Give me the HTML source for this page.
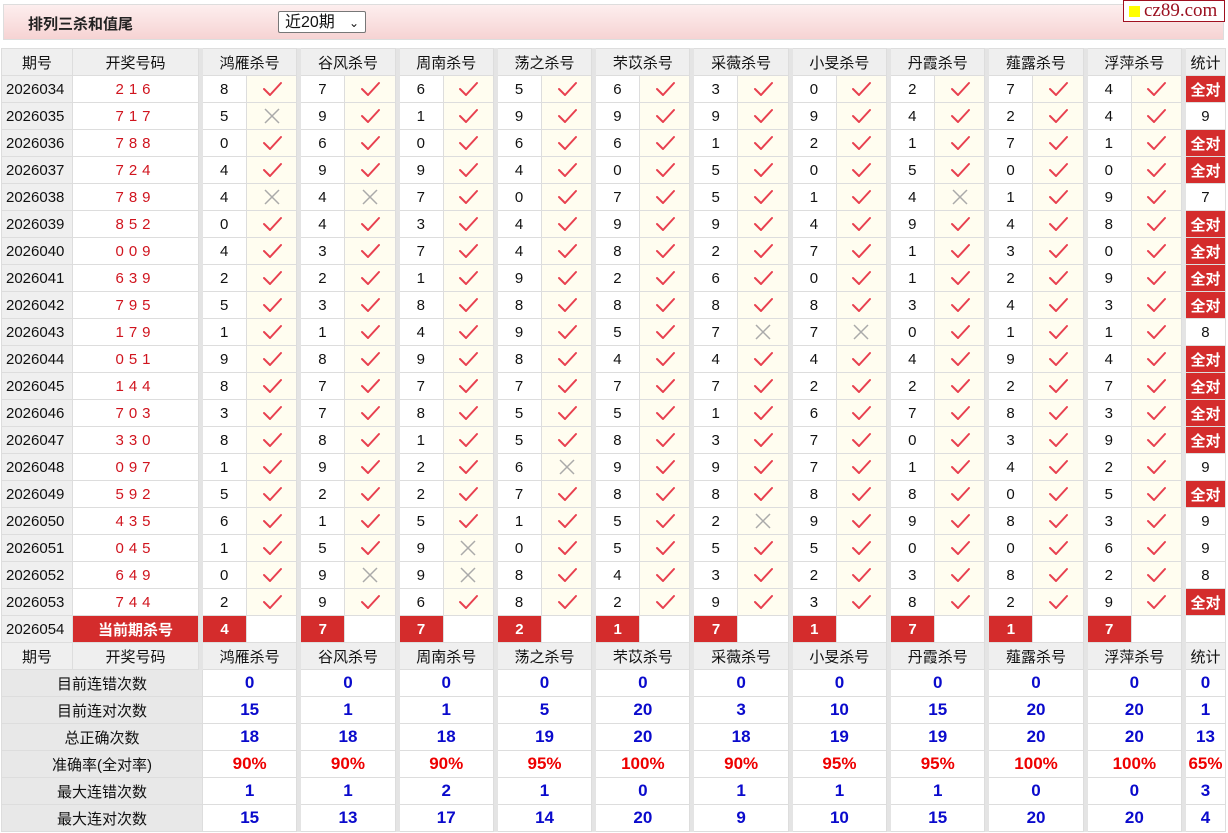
<!DOCTYPE html>
<html><head><meta charset="utf-8"><style>
body{margin:0;background:#fff;font-family:"Liberation Sans","Noto Sans CJK SC",sans-serif;width:1228px;height:833px;overflow:hidden;position:relative}
.hd{position:absolute;left:3px;top:4px;width:1221px;height:36px;border:1px solid #ddd;background:linear-gradient(#fdeeee,#f6d3d3);box-sizing:border-box}
.hd b{position:absolute;left:24px;top:8px;font-size:15px;color:#222}
.sel{position:absolute;left:274px;top:6px;width:88px;height:22px;border:1px solid #777;border-radius:2px;background:#fff;font-size:16px;line-height:22px;padding-left:6px;box-sizing:border-box;color:#111}
.sel i{position:absolute;right:6px;top:0;font-style:normal;font-size:12px}
.logo{position:absolute;left:1123px;top:0;width:102px;height:22px;border:1px solid #a01020;background:#fff;box-sizing:border-box;font-family:"Liberation Serif",serif;font-size:19px;color:#9b1020;line-height:20px;padding-left:20px}
.logo:before{content:"";position:absolute;left:5px;top:5px;width:11px;height:11px;background:#ff0}
table{position:absolute;left:1px;top:48px;border-collapse:collapse;table-layout:fixed}
td{border:1px solid #ddd;height:26px;padding:0;font-size:15px;text-align:center;color:#111;white-space:nowrap}
td.q{background:#efefef;text-align:left;padding-left:4px}
td.h{background:#efefef}
td.s{background:#e4e4e4;border-color:#e4e4e4}
td.n{text-align:left;padding-left:17px}
td.c{background:#fffdf0}
td.r{color:#d0141e;letter-spacing:5px}
td.a{background:#d42c2c;color:#fff;font-weight:bold}
td.l{background:#e8e8e8}
td.b{color:#0a0acc;font-weight:bold;font-size:17px}
td.p{color:#e00;font-weight:bold;font-size:17px}
svg{display:block;margin:0 auto;width:22px;height:20px}
</style></head><body>
<svg width="0" height="0" style="position:absolute"><defs>
<symbol id="k" viewBox="0 0 22 20"><path d="M3 10 L9 16 L20 4" fill="none" stroke="#e8404f" stroke-width="2" stroke-linecap="round" stroke-linejoin="round"/></symbol>
<symbol id="x" viewBox="0 0 22 20"><path d="M4 3 L18 17 M18 3 L4 17" fill="none" stroke="#aaa" stroke-width="1.5"/></symbol>
</defs></svg>
<div class="hd"><b>排列三杀和值尾</b><div class="sel">近20期<i>&#8964;</i></div></div>
<div class="logo">cz89.com</div>
<table>
<colgroup><col style="width:71px"><col style="width:126px"><col style="width:4px">
<col style="width:44px"><col style="width:50.3px"><col style="width:4px">
<col style="width:44px"><col style="width:50.3px"><col style="width:4px">
<col style="width:44px"><col style="width:50.3px"><col style="width:4px">
<col style="width:44px"><col style="width:50.3px"><col style="width:4px">
<col style="width:44px"><col style="width:50.3px"><col style="width:4px">
<col style="width:44px"><col style="width:50.3px"><col style="width:4px">
<col style="width:44px"><col style="width:50.3px"><col style="width:4px">
<col style="width:44px"><col style="width:50.3px"><col style="width:4px">
<col style="width:44px"><col style="width:50.3px"><col style="width:4px">
<col style="width:44px"><col style="width:50.3px"><col style="width:4px">
<col style="width:40px"></colgroup>
<tr><td class="h">期号</td><td class="h">开奖号码</td><td class="s"></td><td class="h" colspan="2">鸿雁杀号</td><td class="s"></td><td class="h" colspan="2">谷风杀号</td><td class="s"></td><td class="h" colspan="2">周南杀号</td><td class="s"></td><td class="h" colspan="2">荡之杀号</td><td class="s"></td><td class="h" colspan="2">芣苡杀号</td><td class="s"></td><td class="h" colspan="2">采薇杀号</td><td class="s"></td><td class="h" colspan="2">小旻杀号</td><td class="s"></td><td class="h" colspan="2">丹霞杀号</td><td class="s"></td><td class="h" colspan="2">薤露杀号</td><td class="s"></td><td class="h" colspan="2">浮萍杀号</td><td class="s"></td><td class="h">统计</td></tr>
<tr><td class="q">2026034</td><td class="r">216</td><td class="s"></td><td class="n">8</td><td class="c"><svg><use href="#k"/></svg></td><td class="s"></td><td class="n">7</td><td class="c"><svg><use href="#k"/></svg></td><td class="s"></td><td class="n">6</td><td class="c"><svg><use href="#k"/></svg></td><td class="s"></td><td class="n">5</td><td class="c"><svg><use href="#k"/></svg></td><td class="s"></td><td class="n">6</td><td class="c"><svg><use href="#k"/></svg></td><td class="s"></td><td class="n">3</td><td class="c"><svg><use href="#k"/></svg></td><td class="s"></td><td class="n">0</td><td class="c"><svg><use href="#k"/></svg></td><td class="s"></td><td class="n">2</td><td class="c"><svg><use href="#k"/></svg></td><td class="s"></td><td class="n">7</td><td class="c"><svg><use href="#k"/></svg></td><td class="s"></td><td class="n">4</td><td class="c"><svg><use href="#k"/></svg></td><td class="s"></td><td class="a">全对</td></tr>
<tr><td class="q">2026035</td><td class="r">717</td><td class="s"></td><td class="n">5</td><td class="c"><svg><use href="#x"/></svg></td><td class="s"></td><td class="n">9</td><td class="c"><svg><use href="#k"/></svg></td><td class="s"></td><td class="n">1</td><td class="c"><svg><use href="#k"/></svg></td><td class="s"></td><td class="n">9</td><td class="c"><svg><use href="#k"/></svg></td><td class="s"></td><td class="n">9</td><td class="c"><svg><use href="#k"/></svg></td><td class="s"></td><td class="n">9</td><td class="c"><svg><use href="#k"/></svg></td><td class="s"></td><td class="n">9</td><td class="c"><svg><use href="#k"/></svg></td><td class="s"></td><td class="n">4</td><td class="c"><svg><use href="#k"/></svg></td><td class="s"></td><td class="n">2</td><td class="c"><svg><use href="#k"/></svg></td><td class="s"></td><td class="n">4</td><td class="c"><svg><use href="#k"/></svg></td><td class="s"></td><td>9</td></tr>
<tr><td class="q">2026036</td><td class="r">788</td><td class="s"></td><td class="n">0</td><td class="c"><svg><use href="#k"/></svg></td><td class="s"></td><td class="n">6</td><td class="c"><svg><use href="#k"/></svg></td><td class="s"></td><td class="n">0</td><td class="c"><svg><use href="#k"/></svg></td><td class="s"></td><td class="n">6</td><td class="c"><svg><use href="#k"/></svg></td><td class="s"></td><td class="n">6</td><td class="c"><svg><use href="#k"/></svg></td><td class="s"></td><td class="n">1</td><td class="c"><svg><use href="#k"/></svg></td><td class="s"></td><td class="n">2</td><td class="c"><svg><use href="#k"/></svg></td><td class="s"></td><td class="n">1</td><td class="c"><svg><use href="#k"/></svg></td><td class="s"></td><td class="n">7</td><td class="c"><svg><use href="#k"/></svg></td><td class="s"></td><td class="n">1</td><td class="c"><svg><use href="#k"/></svg></td><td class="s"></td><td class="a">全对</td></tr>
<tr><td class="q">2026037</td><td class="r">724</td><td class="s"></td><td class="n">4</td><td class="c"><svg><use href="#k"/></svg></td><td class="s"></td><td class="n">9</td><td class="c"><svg><use href="#k"/></svg></td><td class="s"></td><td class="n">9</td><td class="c"><svg><use href="#k"/></svg></td><td class="s"></td><td class="n">4</td><td class="c"><svg><use href="#k"/></svg></td><td class="s"></td><td class="n">0</td><td class="c"><svg><use href="#k"/></svg></td><td class="s"></td><td class="n">5</td><td class="c"><svg><use href="#k"/></svg></td><td class="s"></td><td class="n">0</td><td class="c"><svg><use href="#k"/></svg></td><td class="s"></td><td class="n">5</td><td class="c"><svg><use href="#k"/></svg></td><td class="s"></td><td class="n">0</td><td class="c"><svg><use href="#k"/></svg></td><td class="s"></td><td class="n">0</td><td class="c"><svg><use href="#k"/></svg></td><td class="s"></td><td class="a">全对</td></tr>
<tr><td class="q">2026038</td><td class="r">789</td><td class="s"></td><td class="n">4</td><td class="c"><svg><use href="#x"/></svg></td><td class="s"></td><td class="n">4</td><td class="c"><svg><use href="#x"/></svg></td><td class="s"></td><td class="n">7</td><td class="c"><svg><use href="#k"/></svg></td><td class="s"></td><td class="n">0</td><td class="c"><svg><use href="#k"/></svg></td><td class="s"></td><td class="n">7</td><td class="c"><svg><use href="#k"/></svg></td><td class="s"></td><td class="n">5</td><td class="c"><svg><use href="#k"/></svg></td><td class="s"></td><td class="n">1</td><td class="c"><svg><use href="#k"/></svg></td><td class="s"></td><td class="n">4</td><td class="c"><svg><use href="#x"/></svg></td><td class="s"></td><td class="n">1</td><td class="c"><svg><use href="#k"/></svg></td><td class="s"></td><td class="n">9</td><td class="c"><svg><use href="#k"/></svg></td><td class="s"></td><td>7</td></tr>
<tr><td class="q">2026039</td><td class="r">852</td><td class="s"></td><td class="n">0</td><td class="c"><svg><use href="#k"/></svg></td><td class="s"></td><td class="n">4</td><td class="c"><svg><use href="#k"/></svg></td><td class="s"></td><td class="n">3</td><td class="c"><svg><use href="#k"/></svg></td><td class="s"></td><td class="n">4</td><td class="c"><svg><use href="#k"/></svg></td><td class="s"></td><td class="n">9</td><td class="c"><svg><use href="#k"/></svg></td><td class="s"></td><td class="n">9</td><td class="c"><svg><use href="#k"/></svg></td><td class="s"></td><td class="n">4</td><td class="c"><svg><use href="#k"/></svg></td><td class="s"></td><td class="n">9</td><td class="c"><svg><use href="#k"/></svg></td><td class="s"></td><td class="n">4</td><td class="c"><svg><use href="#k"/></svg></td><td class="s"></td><td class="n">8</td><td class="c"><svg><use href="#k"/></svg></td><td class="s"></td><td class="a">全对</td></tr>
<tr><td class="q">2026040</td><td class="r">009</td><td class="s"></td><td class="n">4</td><td class="c"><svg><use href="#k"/></svg></td><td class="s"></td><td class="n">3</td><td class="c"><svg><use href="#k"/></svg></td><td class="s"></td><td class="n">7</td><td class="c"><svg><use href="#k"/></svg></td><td class="s"></td><td class="n">4</td><td class="c"><svg><use href="#k"/></svg></td><td class="s"></td><td class="n">8</td><td class="c"><svg><use href="#k"/></svg></td><td class="s"></td><td class="n">2</td><td class="c"><svg><use href="#k"/></svg></td><td class="s"></td><td class="n">7</td><td class="c"><svg><use href="#k"/></svg></td><td class="s"></td><td class="n">1</td><td class="c"><svg><use href="#k"/></svg></td><td class="s"></td><td class="n">3</td><td class="c"><svg><use href="#k"/></svg></td><td class="s"></td><td class="n">0</td><td class="c"><svg><use href="#k"/></svg></td><td class="s"></td><td class="a">全对</td></tr>
<tr><td class="q">2026041</td><td class="r">639</td><td class="s"></td><td class="n">2</td><td class="c"><svg><use href="#k"/></svg></td><td class="s"></td><td class="n">2</td><td class="c"><svg><use href="#k"/></svg></td><td class="s"></td><td class="n">1</td><td class="c"><svg><use href="#k"/></svg></td><td class="s"></td><td class="n">9</td><td class="c"><svg><use href="#k"/></svg></td><td class="s"></td><td class="n">2</td><td class="c"><svg><use href="#k"/></svg></td><td class="s"></td><td class="n">6</td><td class="c"><svg><use href="#k"/></svg></td><td class="s"></td><td class="n">0</td><td class="c"><svg><use href="#k"/></svg></td><td class="s"></td><td class="n">1</td><td class="c"><svg><use href="#k"/></svg></td><td class="s"></td><td class="n">2</td><td class="c"><svg><use href="#k"/></svg></td><td class="s"></td><td class="n">9</td><td class="c"><svg><use href="#k"/></svg></td><td class="s"></td><td class="a">全对</td></tr>
<tr><td class="q">2026042</td><td class="r">795</td><td class="s"></td><td class="n">5</td><td class="c"><svg><use href="#k"/></svg></td><td class="s"></td><td class="n">3</td><td class="c"><svg><use href="#k"/></svg></td><td class="s"></td><td class="n">8</td><td class="c"><svg><use href="#k"/></svg></td><td class="s"></td><td class="n">8</td><td class="c"><svg><use href="#k"/></svg></td><td class="s"></td><td class="n">8</td><td class="c"><svg><use href="#k"/></svg></td><td class="s"></td><td class="n">8</td><td class="c"><svg><use href="#k"/></svg></td><td class="s"></td><td class="n">8</td><td class="c"><svg><use href="#k"/></svg></td><td class="s"></td><td class="n">3</td><td class="c"><svg><use href="#k"/></svg></td><td class="s"></td><td class="n">4</td><td class="c"><svg><use href="#k"/></svg></td><td class="s"></td><td class="n">3</td><td class="c"><svg><use href="#k"/></svg></td><td class="s"></td><td class="a">全对</td></tr>
<tr><td class="q">2026043</td><td class="r">179</td><td class="s"></td><td class="n">1</td><td class="c"><svg><use href="#k"/></svg></td><td class="s"></td><td class="n">1</td><td class="c"><svg><use href="#k"/></svg></td><td class="s"></td><td class="n">4</td><td class="c"><svg><use href="#k"/></svg></td><td class="s"></td><td class="n">9</td><td class="c"><svg><use href="#k"/></svg></td><td class="s"></td><td class="n">5</td><td class="c"><svg><use href="#k"/></svg></td><td class="s"></td><td class="n">7</td><td class="c"><svg><use href="#x"/></svg></td><td class="s"></td><td class="n">7</td><td class="c"><svg><use href="#x"/></svg></td><td class="s"></td><td class="n">0</td><td class="c"><svg><use href="#k"/></svg></td><td class="s"></td><td class="n">1</td><td class="c"><svg><use href="#k"/></svg></td><td class="s"></td><td class="n">1</td><td class="c"><svg><use href="#k"/></svg></td><td class="s"></td><td>8</td></tr>
<tr><td class="q">2026044</td><td class="r">051</td><td class="s"></td><td class="n">9</td><td class="c"><svg><use href="#k"/></svg></td><td class="s"></td><td class="n">8</td><td class="c"><svg><use href="#k"/></svg></td><td class="s"></td><td class="n">9</td><td class="c"><svg><use href="#k"/></svg></td><td class="s"></td><td class="n">8</td><td class="c"><svg><use href="#k"/></svg></td><td class="s"></td><td class="n">4</td><td class="c"><svg><use href="#k"/></svg></td><td class="s"></td><td class="n">4</td><td class="c"><svg><use href="#k"/></svg></td><td class="s"></td><td class="n">4</td><td class="c"><svg><use href="#k"/></svg></td><td class="s"></td><td class="n">4</td><td class="c"><svg><use href="#k"/></svg></td><td class="s"></td><td class="n">9</td><td class="c"><svg><use href="#k"/></svg></td><td class="s"></td><td class="n">4</td><td class="c"><svg><use href="#k"/></svg></td><td class="s"></td><td class="a">全对</td></tr>
<tr><td class="q">2026045</td><td class="r">144</td><td class="s"></td><td class="n">8</td><td class="c"><svg><use href="#k"/></svg></td><td class="s"></td><td class="n">7</td><td class="c"><svg><use href="#k"/></svg></td><td class="s"></td><td class="n">7</td><td class="c"><svg><use href="#k"/></svg></td><td class="s"></td><td class="n">7</td><td class="c"><svg><use href="#k"/></svg></td><td class="s"></td><td class="n">7</td><td class="c"><svg><use href="#k"/></svg></td><td class="s"></td><td class="n">7</td><td class="c"><svg><use href="#k"/></svg></td><td class="s"></td><td class="n">2</td><td class="c"><svg><use href="#k"/></svg></td><td class="s"></td><td class="n">2</td><td class="c"><svg><use href="#k"/></svg></td><td class="s"></td><td class="n">2</td><td class="c"><svg><use href="#k"/></svg></td><td class="s"></td><td class="n">7</td><td class="c"><svg><use href="#k"/></svg></td><td class="s"></td><td class="a">全对</td></tr>
<tr><td class="q">2026046</td><td class="r">703</td><td class="s"></td><td class="n">3</td><td class="c"><svg><use href="#k"/></svg></td><td class="s"></td><td class="n">7</td><td class="c"><svg><use href="#k"/></svg></td><td class="s"></td><td class="n">8</td><td class="c"><svg><use href="#k"/></svg></td><td class="s"></td><td class="n">5</td><td class="c"><svg><use href="#k"/></svg></td><td class="s"></td><td class="n">5</td><td class="c"><svg><use href="#k"/></svg></td><td class="s"></td><td class="n">1</td><td class="c"><svg><use href="#k"/></svg></td><td class="s"></td><td class="n">6</td><td class="c"><svg><use href="#k"/></svg></td><td class="s"></td><td class="n">7</td><td class="c"><svg><use href="#k"/></svg></td><td class="s"></td><td class="n">8</td><td class="c"><svg><use href="#k"/></svg></td><td class="s"></td><td class="n">3</td><td class="c"><svg><use href="#k"/></svg></td><td class="s"></td><td class="a">全对</td></tr>
<tr><td class="q">2026047</td><td class="r">330</td><td class="s"></td><td class="n">8</td><td class="c"><svg><use href="#k"/></svg></td><td class="s"></td><td class="n">8</td><td class="c"><svg><use href="#k"/></svg></td><td class="s"></td><td class="n">1</td><td class="c"><svg><use href="#k"/></svg></td><td class="s"></td><td class="n">5</td><td class="c"><svg><use href="#k"/></svg></td><td class="s"></td><td class="n">8</td><td class="c"><svg><use href="#k"/></svg></td><td class="s"></td><td class="n">3</td><td class="c"><svg><use href="#k"/></svg></td><td class="s"></td><td class="n">7</td><td class="c"><svg><use href="#k"/></svg></td><td class="s"></td><td class="n">0</td><td class="c"><svg><use href="#k"/></svg></td><td class="s"></td><td class="n">3</td><td class="c"><svg><use href="#k"/></svg></td><td class="s"></td><td class="n">9</td><td class="c"><svg><use href="#k"/></svg></td><td class="s"></td><td class="a">全对</td></tr>
<tr><td class="q">2026048</td><td class="r">097</td><td class="s"></td><td class="n">1</td><td class="c"><svg><use href="#k"/></svg></td><td class="s"></td><td class="n">9</td><td class="c"><svg><use href="#k"/></svg></td><td class="s"></td><td class="n">2</td><td class="c"><svg><use href="#k"/></svg></td><td class="s"></td><td class="n">6</td><td class="c"><svg><use href="#x"/></svg></td><td class="s"></td><td class="n">9</td><td class="c"><svg><use href="#k"/></svg></td><td class="s"></td><td class="n">9</td><td class="c"><svg><use href="#k"/></svg></td><td class="s"></td><td class="n">7</td><td class="c"><svg><use href="#k"/></svg></td><td class="s"></td><td class="n">1</td><td class="c"><svg><use href="#k"/></svg></td><td class="s"></td><td class="n">4</td><td class="c"><svg><use href="#k"/></svg></td><td class="s"></td><td class="n">2</td><td class="c"><svg><use href="#k"/></svg></td><td class="s"></td><td>9</td></tr>
<tr><td class="q">2026049</td><td class="r">592</td><td class="s"></td><td class="n">5</td><td class="c"><svg><use href="#k"/></svg></td><td class="s"></td><td class="n">2</td><td class="c"><svg><use href="#k"/></svg></td><td class="s"></td><td class="n">2</td><td class="c"><svg><use href="#k"/></svg></td><td class="s"></td><td class="n">7</td><td class="c"><svg><use href="#k"/></svg></td><td class="s"></td><td class="n">8</td><td class="c"><svg><use href="#k"/></svg></td><td class="s"></td><td class="n">8</td><td class="c"><svg><use href="#k"/></svg></td><td class="s"></td><td class="n">8</td><td class="c"><svg><use href="#k"/></svg></td><td class="s"></td><td class="n">8</td><td class="c"><svg><use href="#k"/></svg></td><td class="s"></td><td class="n">0</td><td class="c"><svg><use href="#k"/></svg></td><td class="s"></td><td class="n">5</td><td class="c"><svg><use href="#k"/></svg></td><td class="s"></td><td class="a">全对</td></tr>
<tr><td class="q">2026050</td><td class="r">435</td><td class="s"></td><td class="n">6</td><td class="c"><svg><use href="#k"/></svg></td><td class="s"></td><td class="n">1</td><td class="c"><svg><use href="#k"/></svg></td><td class="s"></td><td class="n">5</td><td class="c"><svg><use href="#k"/></svg></td><td class="s"></td><td class="n">1</td><td class="c"><svg><use href="#k"/></svg></td><td class="s"></td><td class="n">5</td><td class="c"><svg><use href="#k"/></svg></td><td class="s"></td><td class="n">2</td><td class="c"><svg><use href="#x"/></svg></td><td class="s"></td><td class="n">9</td><td class="c"><svg><use href="#k"/></svg></td><td class="s"></td><td class="n">9</td><td class="c"><svg><use href="#k"/></svg></td><td class="s"></td><td class="n">8</td><td class="c"><svg><use href="#k"/></svg></td><td class="s"></td><td class="n">3</td><td class="c"><svg><use href="#k"/></svg></td><td class="s"></td><td>9</td></tr>
<tr><td class="q">2026051</td><td class="r">045</td><td class="s"></td><td class="n">1</td><td class="c"><svg><use href="#k"/></svg></td><td class="s"></td><td class="n">5</td><td class="c"><svg><use href="#k"/></svg></td><td class="s"></td><td class="n">9</td><td class="c"><svg><use href="#x"/></svg></td><td class="s"></td><td class="n">0</td><td class="c"><svg><use href="#k"/></svg></td><td class="s"></td><td class="n">5</td><td class="c"><svg><use href="#k"/></svg></td><td class="s"></td><td class="n">5</td><td class="c"><svg><use href="#k"/></svg></td><td class="s"></td><td class="n">5</td><td class="c"><svg><use href="#k"/></svg></td><td class="s"></td><td class="n">0</td><td class="c"><svg><use href="#k"/></svg></td><td class="s"></td><td class="n">0</td><td class="c"><svg><use href="#k"/></svg></td><td class="s"></td><td class="n">6</td><td class="c"><svg><use href="#k"/></svg></td><td class="s"></td><td>9</td></tr>
<tr><td class="q">2026052</td><td class="r">649</td><td class="s"></td><td class="n">0</td><td class="c"><svg><use href="#k"/></svg></td><td class="s"></td><td class="n">9</td><td class="c"><svg><use href="#x"/></svg></td><td class="s"></td><td class="n">9</td><td class="c"><svg><use href="#x"/></svg></td><td class="s"></td><td class="n">8</td><td class="c"><svg><use href="#k"/></svg></td><td class="s"></td><td class="n">4</td><td class="c"><svg><use href="#k"/></svg></td><td class="s"></td><td class="n">3</td><td class="c"><svg><use href="#k"/></svg></td><td class="s"></td><td class="n">2</td><td class="c"><svg><use href="#k"/></svg></td><td class="s"></td><td class="n">3</td><td class="c"><svg><use href="#k"/></svg></td><td class="s"></td><td class="n">8</td><td class="c"><svg><use href="#k"/></svg></td><td class="s"></td><td class="n">2</td><td class="c"><svg><use href="#k"/></svg></td><td class="s"></td><td>8</td></tr>
<tr><td class="q">2026053</td><td class="r">744</td><td class="s"></td><td class="n">2</td><td class="c"><svg><use href="#k"/></svg></td><td class="s"></td><td class="n">9</td><td class="c"><svg><use href="#k"/></svg></td><td class="s"></td><td class="n">6</td><td class="c"><svg><use href="#k"/></svg></td><td class="s"></td><td class="n">8</td><td class="c"><svg><use href="#k"/></svg></td><td class="s"></td><td class="n">2</td><td class="c"><svg><use href="#k"/></svg></td><td class="s"></td><td class="n">9</td><td class="c"><svg><use href="#k"/></svg></td><td class="s"></td><td class="n">3</td><td class="c"><svg><use href="#k"/></svg></td><td class="s"></td><td class="n">8</td><td class="c"><svg><use href="#k"/></svg></td><td class="s"></td><td class="n">2</td><td class="c"><svg><use href="#k"/></svg></td><td class="s"></td><td class="n">9</td><td class="c"><svg><use href="#k"/></svg></td><td class="s"></td><td class="a">全对</td></tr>
<tr><td class="q">2026054</td><td class="a">当前期杀号</td><td class="s"></td><td class="a">4</td><td></td><td class="s"></td><td class="a">7</td><td></td><td class="s"></td><td class="a">7</td><td></td><td class="s"></td><td class="a">2</td><td></td><td class="s"></td><td class="a">1</td><td></td><td class="s"></td><td class="a">7</td><td></td><td class="s"></td><td class="a">1</td><td></td><td class="s"></td><td class="a">7</td><td></td><td class="s"></td><td class="a">1</td><td></td><td class="s"></td><td class="a">7</td><td></td><td class="s"></td><td></td></tr>
<tr><td class="h">期号</td><td class="h">开奖号码</td><td class="s"></td><td class="h" colspan="2">鸿雁杀号</td><td class="s"></td><td class="h" colspan="2">谷风杀号</td><td class="s"></td><td class="h" colspan="2">周南杀号</td><td class="s"></td><td class="h" colspan="2">荡之杀号</td><td class="s"></td><td class="h" colspan="2">芣苡杀号</td><td class="s"></td><td class="h" colspan="2">采薇杀号</td><td class="s"></td><td class="h" colspan="2">小旻杀号</td><td class="s"></td><td class="h" colspan="2">丹霞杀号</td><td class="s"></td><td class="h" colspan="2">薤露杀号</td><td class="s"></td><td class="h" colspan="2">浮萍杀号</td><td class="s"></td><td class="h">统计</td></tr>
<tr><td class="l" colspan="3">目前连错次数</td><td class="b" colspan="2">0</td><td class="s"></td><td class="b" colspan="2">0</td><td class="s"></td><td class="b" colspan="2">0</td><td class="s"></td><td class="b" colspan="2">0</td><td class="s"></td><td class="b" colspan="2">0</td><td class="s"></td><td class="b" colspan="2">0</td><td class="s"></td><td class="b" colspan="2">0</td><td class="s"></td><td class="b" colspan="2">0</td><td class="s"></td><td class="b" colspan="2">0</td><td class="s"></td><td class="b" colspan="2">0</td><td class="s"></td><td class="b">0</td></tr>
<tr><td class="l" colspan="3">目前连对次数</td><td class="b" colspan="2">15</td><td class="s"></td><td class="b" colspan="2">1</td><td class="s"></td><td class="b" colspan="2">1</td><td class="s"></td><td class="b" colspan="2">5</td><td class="s"></td><td class="b" colspan="2">20</td><td class="s"></td><td class="b" colspan="2">3</td><td class="s"></td><td class="b" colspan="2">10</td><td class="s"></td><td class="b" colspan="2">15</td><td class="s"></td><td class="b" colspan="2">20</td><td class="s"></td><td class="b" colspan="2">20</td><td class="s"></td><td class="b">1</td></tr>
<tr><td class="l" colspan="3">总正确次数</td><td class="b" colspan="2">18</td><td class="s"></td><td class="b" colspan="2">18</td><td class="s"></td><td class="b" colspan="2">18</td><td class="s"></td><td class="b" colspan="2">19</td><td class="s"></td><td class="b" colspan="2">20</td><td class="s"></td><td class="b" colspan="2">18</td><td class="s"></td><td class="b" colspan="2">19</td><td class="s"></td><td class="b" colspan="2">19</td><td class="s"></td><td class="b" colspan="2">20</td><td class="s"></td><td class="b" colspan="2">20</td><td class="s"></td><td class="b">13</td></tr>
<tr><td class="l" colspan="3">准确率(全对率)</td><td class="p" colspan="2">90%</td><td class="s"></td><td class="p" colspan="2">90%</td><td class="s"></td><td class="p" colspan="2">90%</td><td class="s"></td><td class="p" colspan="2">95%</td><td class="s"></td><td class="p" colspan="2">100%</td><td class="s"></td><td class="p" colspan="2">90%</td><td class="s"></td><td class="p" colspan="2">95%</td><td class="s"></td><td class="p" colspan="2">95%</td><td class="s"></td><td class="p" colspan="2">100%</td><td class="s"></td><td class="p" colspan="2">100%</td><td class="s"></td><td class="p">65%</td></tr>
<tr><td class="l" colspan="3">最大连错次数</td><td class="b" colspan="2">1</td><td class="s"></td><td class="b" colspan="2">1</td><td class="s"></td><td class="b" colspan="2">2</td><td class="s"></td><td class="b" colspan="2">1</td><td class="s"></td><td class="b" colspan="2">0</td><td class="s"></td><td class="b" colspan="2">1</td><td class="s"></td><td class="b" colspan="2">1</td><td class="s"></td><td class="b" colspan="2">1</td><td class="s"></td><td class="b" colspan="2">0</td><td class="s"></td><td class="b" colspan="2">0</td><td class="s"></td><td class="b">3</td></tr>
<tr><td class="l" colspan="3">最大连对次数</td><td class="b" colspan="2">15</td><td class="s"></td><td class="b" colspan="2">13</td><td class="s"></td><td class="b" colspan="2">17</td><td class="s"></td><td class="b" colspan="2">14</td><td class="s"></td><td class="b" colspan="2">20</td><td class="s"></td><td class="b" colspan="2">9</td><td class="s"></td><td class="b" colspan="2">10</td><td class="s"></td><td class="b" colspan="2">15</td><td class="s"></td><td class="b" colspan="2">20</td><td class="s"></td><td class="b" colspan="2">20</td><td class="s"></td><td class="b">4</td></tr>
</table>
</body></html>
